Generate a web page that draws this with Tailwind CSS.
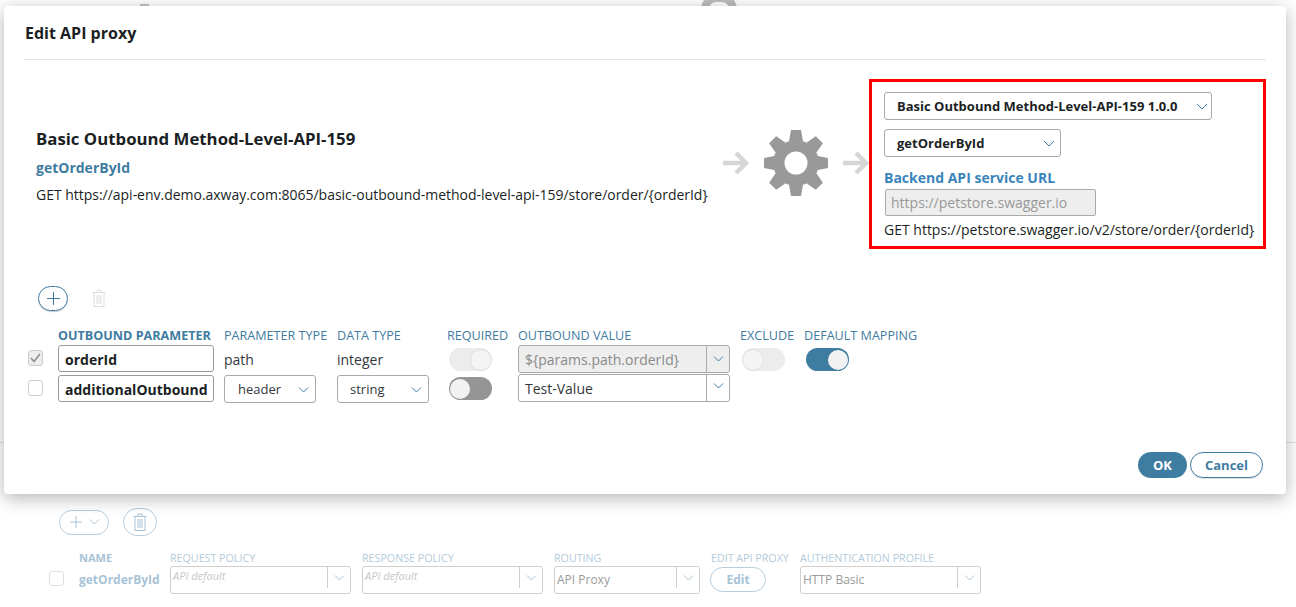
<!DOCTYPE html>
<html lang="en">
<head>
  <meta charset="UTF-8">
  <title>Edit API proxy</title>
  <script src="https://cdn.jsdelivr.net/npm/@tailwindcss/browser@4"></script>
</head>
<body class="bg-white">
  <div class="relative h-[607px] w-[1296px] overflow-hidden bg-white font-['Open_Sans',sans-serif] text-[14px] text-[#1b1f24]">

    <!-- page behind the dialog -->
    <div class="h-[443px] border-b border-[#e4e4e4]"></div>
    <div class="pl-[49px] pt-[65px]">
      <div class="ml-[10px] flex items-center gap-[14px]">
        <div class="flex h-[25px] w-[50px] items-center justify-center gap-[6px] rounded-full border border-[#b5cddd]">
          <svg class="h-[14px] w-[14px]" viewBox="0 0 14 14" fill="none" stroke="#a9c3d6"><path d="M7 1v12M1 7h12"/></svg>
          <svg class="h-[6px] w-[11px]" viewBox="0 0 11 6" fill="none" stroke="#a9c3d6"><path d="M1 .5l4.5 4.5L10 .5"/></svg>
        </div>
        <div class="flex h-[28px] w-[34px] items-center justify-center rounded-full border border-[#b5cddd]">
          <svg class="h-[18px] w-[14px]" viewBox="0 0 14 18" fill="none" stroke="#a9c3d6"><path d="M.5 3.5h13M5 3.5V1h4v2.5M2 3.5v14h10v-14M5 6v9M7 6v9M9 6v9"/></svg>
        </div>
      </div>
      <div class="mt-[14px] grid grid-cols-[30px_91px_192px_192px_157px_89px_181px] grid-rows-[16px_28px] text-[10.7px] leading-[16px] text-[#b3cbdb]">
        <div></div>
        <div class="font-bold text-[11px] text-[#a9c3d6]">NAME</div>
        <div>REQUEST POLICY</div>
        <div>RESPONSE POLICY</div>
        <div>ROUTING</div>
        <div>EDIT API PROXY</div>
        <div>AUTHENTICATION PROFILE</div>

        <div class="mt-[5px] h-[15px] w-[15px] rounded-[3px] border border-[#dfdfdf]"></div>
        <div class="mt-[6px] text-[12px] font-bold text-[#a9c3d6]">getOrderById</div>
        <div class="flex w-[181px] rounded-[3px] border border-[#cfcfcf]">
          <span class="flex-1 pl-[2px] pt-[1px] text-[11px] italic text-[#c8c8c8]">API default</span>
          <span class="flex h-[21px] w-[23px] items-center justify-center border-l border-[#cfcfcf]"><svg class="h-[6px] w-[11px]" viewBox="0 0 11 6" fill="none" stroke="#a9c3d6"><path d="M1 .5l4.5 4.5L10 .5"/></svg></span>
        </div>
        <div class="flex w-[181px] rounded-[3px] border border-[#cfcfcf]">
          <span class="flex-1 pl-[2px] pt-[1px] text-[11px] italic text-[#c8c8c8]">API default</span>
          <span class="flex h-[21px] w-[23px] items-center justify-center border-l border-[#cfcfcf]"><svg class="h-[6px] w-[11px]" viewBox="0 0 11 6" fill="none" stroke="#a9c3d6"><path d="M1 .5l4.5 4.5L10 .5"/></svg></span>
        </div>
        <div class="flex w-[146px] rounded-[3px] border border-[#cfcfcf]">
          <span class="flex-1 pl-[2px] pt-[5px] text-[12px] text-[#9a9a9a]">API Proxy</span>
          <span class="flex h-[21px] w-[23px] items-center justify-center border-l border-[#cfcfcf]"><svg class="h-[6px] w-[11px]" viewBox="0 0 11 6" fill="none" stroke="#a9c3d6"><path d="M1 .5l4.5 4.5L10 .5"/></svg></span>
        </div>
        <div class="ml-[-1px] mt-[1px] flex h-[25px] w-[56px] items-center justify-center rounded-full border border-[#b5cddd] text-[12px] font-bold text-[#a9c3d6]">Edit</div>
        <div class="flex w-[181px] rounded-[3px] border border-[#cfcfcf]">
          <span class="flex-1 pl-[2px] pt-[5px] text-[12px] text-[#9a9a9a]">HTTP Basic</span>
          <span class="flex h-[21px] w-[23px] items-center justify-center border-l border-[#cfcfcf]"><svg class="h-[6px] w-[11px]" viewBox="0 0 11 6" fill="none" stroke="#a9c3d6"><path d="M1 .5l4.5 4.5L10 .5"/></svg></span>
        </div>
      </div>
    </div>

    <!-- bits of the page peeking above the dialog -->
    <div class="absolute left-[140px] top-[4px] h-[3px] w-[9px] bg-[#c4c4c4]"></div>
    <div class="absolute left-[701px] top-[-6px] h-[30px] w-[36px] rounded-full border-[8px] border-[#bdbdbd]"></div>

    <!-- dialog -->
    <div class="absolute left-[4px] top-[6px] flex h-[488px] w-[1282px] flex-col rounded-[4px] bg-white shadow-[0_4px_18px_rgba(0,0,0,0.3)]">
      <div class="mx-5 flex h-[54px] items-center border-b border-[#e6e6e6] pl-[1px] pt-[1px] text-[16px] font-bold leading-none">Edit API proxy</div>

      <div class="ml-5 mr-5 mt-[19px] flex h-[170px] items-center">
        <div class="pl-3 pt-[5px]">
          <div class="text-[16.8px] font-bold leading-[22px]">Basic Outbound Method-Level-API-159</div>
          <div class="mt-[8px] text-[14px] font-bold leading-[20px] text-[#3f7ca1]">getOrderById</div>
          <div class="mt-[7px] text-[14px] leading-[20px] tracking-[-0.02px]">GET https://api-env.demo.axway.com:8065/basic-outbound-method-level-api-159/store/order/{orderId}</div>
        </div>

        <div class="ml-auto mt-[-2px] flex items-center">
          <svg class="h-[24px] w-[26px]" viewBox="0 0 26 24" fill="none" stroke="#d6d6d6" stroke-width="4.5"><path d="M0 12h23M13 2l10 10-10 10"/></svg>
          <svg class="ml-[15px] h-[66px] w-[64px]" viewBox="-32 -33 64 66" fill="#999999">
            <circle r="23"/>
            <g>
              <polygon points="-7,-22 -5,-33 5,-33 7,-22"/>
              <polygon transform="rotate(45)" points="-7,-22 -5,-33 5,-33 7,-22"/>
              <polygon transform="rotate(90)" points="-7,-22 -5,-32 5,-32 7,-22"/>
              <polygon transform="rotate(135)" points="-7,-22 -5,-33 5,-33 7,-22"/>
              <polygon transform="rotate(180)" points="-7,-22 -5,-33 5,-33 7,-22"/>
              <polygon transform="rotate(225)" points="-7,-22 -5,-33 5,-33 7,-22"/>
              <polygon transform="rotate(270)" points="-7,-22 -5,-32 5,-32 7,-22"/>
              <polygon transform="rotate(315)" points="-7,-22 -5,-33 5,-33 7,-22"/>
            </g>
            <circle r="11.5" fill="#ffffff"/>
          </svg>
          <svg class="ml-[15px] h-[24px] w-[26px]" viewBox="0 0 26 24" fill="none" stroke="#d6d6d6" stroke-width="4.5"><path d="M0 12h23M13 2l10 10-10 10"/></svg>
        </div>

        <div class="h-[170px] w-[397px] border-[3px] border-[#ff0000] pl-3 pt-[10px]">
          <div class="flex h-[28px] w-[328px] items-center justify-between rounded-[3px] border border-[#a9a9a9] pl-[12px] pr-[3px] pt-[1px] text-[13px] font-bold">
            <span>Basic Outbound Method-Level-API-159 1.0.0</span>
            <svg class="h-[7px] w-[12px]" viewBox="0 0 12 7" fill="none" stroke="#3f7ca1"><path d="M1 1l5 5 5-5"/></svg>
          </div>
          <div class="mt-[9px] flex h-[28px] w-[177px] items-center justify-between rounded-[3px] border border-[#a9a9a9] pl-[12px] pr-[5px] pt-[1px] text-[13px] font-bold">
            <span>getOrderById</span>
            <svg class="h-[7px] w-[12px]" viewBox="0 0 12 7" fill="none" stroke="#3f7ca1"><path d="M1 1l5 5 5-5"/></svg>
          </div>
          <div class="mt-[11px] text-[14px] font-bold leading-[20px] text-[#3a84bb]">Backend API service URL</div>
          <div class="ml-[1px] mt-[1px] flex h-[27px] w-[211px] items-center rounded-[2px] border border-[#a9a9a9] bg-[#eeeeee] pl-[5px] text-[#999999]">https://petstore.swagger.io</div>
          <div class="mt-[4px] leading-[20px]">GET https://petstore.swagger.io/v2/store/order/{orderId}</div>
        </div>
      </div>

      <div class="ml-[34px] mt-[36px] flex h-[26px] items-center gap-[24px]">
        <div class="flex h-[25px] w-[30px] items-center justify-center rounded-full border border-[#3f7ca1] shadow-[0_1px_1px_rgba(0,0,0,0.2)]">
          <svg class="h-[13px] w-[13px]" viewBox="0 0 13 13" fill="none" stroke="#3f7ca1"><path d="M6.5 0v13M0 6.5h13"/></svg>
        </div>
        <svg class="h-[18px] w-[14px]" viewBox="0 0 14 18" fill="none" stroke="#dddddd"><path d="M.5 3.5h13M5 3.5V1h4v2.5M2 3.5v14h10v-14M5 6v9M7 6v9M9 6v9"/></svg>
      </div>

      <div class="ml-[24px] mt-[16px] grid grid-cols-[30px_166px_113px_110px_71px_222px_64px_auto] grid-rows-[18px_28px_30px] text-[12.6px] leading-[17px] text-[#3f7ca1]">
        <div></div>
        <div class="font-bold">OUTBOUND PARAMETER</div>
        <div>PARAMETER TYPE</div>
        <div>DATA TYPE</div>
        <div>REQUIRED</div>
        <div>OUTBOUND VALUE</div>
        <div>EXCLUDE</div>
        <div>DEFAULT MAPPING</div>

        <div class="mt-[5px] flex h-[16px] w-[15px] items-center justify-center rounded-[3px] border border-[#cccccc] bg-[#eeeeee]">
          <svg class="h-[10px] w-[11px]" viewBox="0 0 11 10" fill="none" stroke="#8f8f8f" stroke-width="1.6"><path d="M1 5l3 3.5L10 1"/></svg>
        </div>
        <div class="flex h-[27px] w-[156px] items-center rounded-[3px] border border-[#999999] pl-[6px] pt-[2px] text-[14px] font-bold text-[#1b1f24]">orderId</div>
        <div class="flex h-[27px] items-center pt-[2px] text-[14px] text-[#33383d]">path</div>
        <div class="flex h-[27px] items-center pt-[2px] text-[14px] text-[#33383d]">integer</div>
        <div class="ml-[2px] mt-[3px] flex h-[23px] w-[43px] items-center justify-end rounded-full bg-[#ececec] px-[1px]">
          <span class="h-[20px] w-[20px] rounded-full bg-[#f4f4f4] shadow-[0_0_2px_rgba(0,0,0,0.15)]"></span>
        </div>
        <div class="flex h-[28px] w-[212px] rounded-[3px] border border-[#a9a9a9] bg-[#eeeeee] text-[14px] text-[#8a8a8a]">
          <span class="flex flex-1 items-center pl-[6px]">${params.path.orderId}</span>
          <span class="flex w-[23px] items-center justify-center border-l border-[#a9a9a9]"><svg class="h-[6px] w-[11px]" viewBox="0 0 11 6" fill="none" stroke="#3f7ca1"><path d="M1 .5l4.5 4.5L10 .5"/></svg></span>
        </div>
        <div class="ml-[2px] mt-[3px] flex h-[23px] w-[43px] items-center rounded-full bg-[#ececec] px-[1px]">
          <span class="h-[20px] w-[20px] rounded-full bg-[#f4f4f4] shadow-[0_0_2px_rgba(0,0,0,0.15)]"></span>
        </div>
        <div class="ml-[2px] mt-[3px] flex h-[23px] w-[43px] items-center justify-end rounded-full bg-[#3f7ca1] px-[1px]">
          <span class="h-[20px] w-[20px] rounded-full bg-[#f2f2f2]"></span>
        </div>

        <div class="mt-[7px] h-[16px] w-[15px] rounded-[3px] border border-[#cccccc]"></div>
        <div class="mt-[2px] flex h-[27px] w-[156px] items-center rounded-[3px] border border-[#999999] pl-[6px] pt-[2px] text-[14px] font-bold text-[#1b1f24]">additionalOutbound</div>
        <div class="mt-[2px] flex h-[28px] w-[92px] items-center justify-between rounded-[3px] border border-[#a9a9a9] pl-[13px] pr-[6px] pt-[1px] text-[13px] text-[#33383d]">
          <span>header</span>
          <svg class="h-[6px] w-[11px]" viewBox="0 0 11 6" fill="none" stroke="#3f7ca1"><path d="M1 .5l4.5 4.5L10 .5"/></svg>
        </div>
        <div class="mt-[2px] flex h-[28px] w-[92px] items-center justify-between rounded-[3px] border border-[#a9a9a9] pl-[12px] pr-[6px] pt-[1px] text-[13px] text-[#33383d]">
          <span>string</span>
          <svg class="h-[6px] w-[11px]" viewBox="0 0 11 6" fill="none" stroke="#3f7ca1"><path d="M1 .5l4.5 4.5L10 .5"/></svg>
        </div>
        <div class="ml-[2px] mt-[4px] flex h-[23px] w-[43px] items-center rounded-full bg-[#959595] px-[1px]">
          <span class="h-[20px] w-[20px] rounded-full bg-[#f2f2f2]"></span>
        </div>
        <div class="mt-[1px] flex h-[28px] w-[212px] rounded-[3px] border border-[#a9a9a9] text-[14px] text-[#33383d]">
          <span class="flex flex-1 items-center pl-[6px] pt-[1px]">Test-Value</span>
          <span class="flex w-[23px] items-center justify-center border-l border-[#a9a9a9] pb-[4px]"><svg class="h-[6px] w-[11px]" viewBox="0 0 11 6" fill="none" stroke="#3f7ca1"><path d="M1 .5l4.5 4.5L10 .5"/></svg></span>
        </div>
      </div>

      <div class="mb-[16px] mr-[23px] mt-auto flex justify-end gap-[3px] text-[13px] font-bold">
        <button class="h-[26px] w-[49px] rounded-full bg-[#3f7ca1] pt-[1px] text-white">OK</button>
        <button class="h-[26px] w-[73px] rounded-full border border-[#3f7ca1] pt-[1px] text-[#3f7ca1] shadow-[0_1px_1px_rgba(0,0,0,0.15)]">Cancel</button>
      </div>
    </div>
  </div>
</body>
</html>
